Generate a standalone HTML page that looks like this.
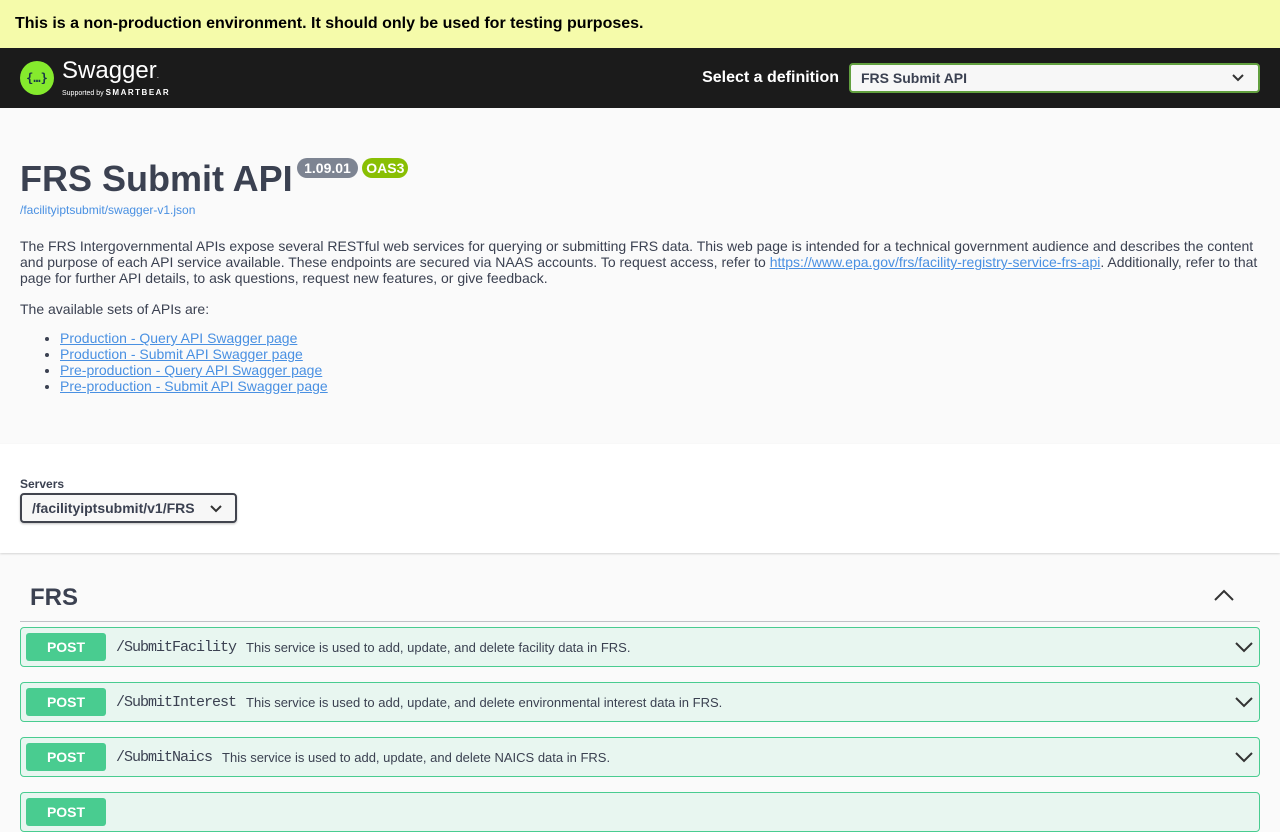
<!DOCTYPE html>
<html><head><meta charset="utf-8"><style>
*{box-sizing:border-box}
body{margin:0;font-family:"Liberation Sans",sans-serif;color:#3b4151;background:#fafafa;width:1280px;height:800px;overflow:hidden}
.banner{height:48px;background:#f5fbaa;color:#000;font-weight:bold;font-size:16px;padding:15px 15px 0}
.top{height:60px;background:#1b1b1b;display:flex;align-items:center;padding:0 20px;position:relative}
.sel{position:absolute;right:20px;top:15px;display:flex;align-items:center}
.sel label{color:#fff;font-weight:bold;font-size:16px;margin-right:10px}
.sel .box{width:411px;height:30px;border:2px solid #62a03f;border-radius:4px;background:#f7f7f7;font-weight:bold;font-size:14px;padding:5px 10px;position:relative;color:#3b4151}
.info{padding:50px 20px 50px;background:#fafafa}
h1{font-size:36px;margin:0;display:inline-block;font-weight:bold}
.badge{display:inline-block;vertical-align:top;margin-top:0;border-radius:57px;color:#fff;font-weight:bold;font-size:14px;padding:2px 5px;line-height:16px}
.url{font-size:12px;color:#4990e2;margin-top:3px}
p{font-size:14px;line-height:16px;margin:0 0 15px}
a{color:#4990e2}
ul{margin:0;padding-left:40px;font-size:14px;line-height:16px}
.servers{background:#fff;height:109px;padding:33px 20px 0;box-shadow:0 1px 2px rgba(0,0,0,.15)}
.servers .t{font-size:12px;font-weight:bold;margin-bottom:2px}
.sbox{width:217px;height:30px;border:2px solid #41444e;border-radius:4px;background:#f7f7f7;font-weight:bold;font-size:14px;padding:5px 10px;box-shadow:0 1px 2px rgba(0,0,0,.25)}
.tag{margin:0 20px;border-bottom:1px solid rgba(59,65,81,.3);height:69px;padding:31px 10px 0;position:relative}
.tag h3{margin:0;font-size:24px}
.op{margin:5px 20px 15px;height:40px;border:1px solid #49cc90;border-radius:4px;background:#e8f6f0;display:flex;align-items:center;padding:0 5px;position:relative}
.m{width:80px;height:28px;background:#49cc90;color:#fff;font-weight:bold;font-size:14px;border-radius:3px;text-align:center;line-height:28px}
.path{font-family:"Liberation Mono",monospace;font-size:15px;letter-spacing:-1px;padding:0 10px;color:#3b4151}
.d{font-size:13px}
.chev{position:absolute;right:6px;top:13px}
</style></head><body>
<div class="banner">This is a non-production environment. It should only be used for testing purposes.</div>
<div class="top">
<svg width="34" height="34" viewBox="0 0 34 34"><circle cx="17" cy="17" r="17" fill="#85ea2d"/><text x="17" y="21" font-size="12" text-anchor="middle" fill="#173647" font-family="DejaVu Sans Mono" font-weight="bold">{…}</text></svg>
<div style="margin-left:8px;color:#fff"><div style="font-size:24px;line-height:24px">Swagger<span style="font-size:8px">.</span></div><div style="font-size:7px;margin-left:0px">Supported by <b style="letter-spacing:1.5px;font-size:8px">SMARTBEAR</b></div></div>
<div class="sel"><label>Select a definition</label><div class="box">FRS Submit API<svg style="position:absolute;right:14px;top:9px" width="12" height="8"><path d="M1 1l5 5 5-5" stroke="#333" stroke-width="2" fill="none"/></svg></div></div>
</div>
<div class="info">
<h1>FRS Submit API</h1> <span class="badge" style="background:#7d8492;padding:2px 7px">1.09.01</span> <span class="badge" style="background:#89bf04;padding:2px 4px">OAS3</span>
<div class="url">/facilityiptsubmit/swagger-v1.json</div>
<div style="height:21px"></div>
<p>The FRS Intergovernmental APIs expose several RESTful web services for querying or submitting FRS data. This web page is intended for a technical government audience and describes the content and purpose of each API service available. These endpoints are secured via NAAS accounts. To request access, refer to <a href="#">https://www.epa.gov/frs/facility-registry-service-frs-api</a>. Additionally, refer to that page for further API details, to ask questions, request new features, or give feedback.</p>
<p style="margin-bottom:13px">The available sets of APIs are:</p>
<ul><li><a href="#">Production - Query API Swagger page</a></li><li><a href="#">Production - Submit API Swagger page</a></li><li><a href="#">Pre-production - Query API Swagger page</a></li><li><a href="#">Pre-production - Submit API Swagger page</a></li></ul>
</div>
<div class="servers"><div class="t">Servers</div><div class="sbox">/facilityiptsubmit/v1/FRS <svg style="margin-left:12px" width="12" height="8"><path d="M1 1l5 5 5-5" stroke="#333" stroke-width="2" fill="none"/></svg></div></div>
<div class="tag"><h3>FRS</h3><svg style="position:absolute;right:26px;top:36px" width="20" height="12"><path d="M1 11l9-9 9 9" stroke="#333" stroke-width="2" fill="none"/></svg></div>
<div class="op"><div class="m">POST</div><span class="path">/SubmitFacility</span><span class="d">This service is used to add, update, and delete facility data in FRS.</span><svg class="chev" width="18" height="12"><path d="M1 2l8 8 8-8" stroke="#333" stroke-width="2" fill="none"/></svg></div>
<div class="op"><div class="m">POST</div><span class="path">/SubmitInterest</span><span class="d">This service is used to add, update, and delete environmental interest data in FRS.</span><svg class="chev" width="18" height="12"><path d="M1 2l8 8 8-8" stroke="#333" stroke-width="2" fill="none"/></svg></div>
<div class="op"><div class="m">POST</div><span class="path">/SubmitNaics</span><span class="d">This service is used to add, update, and delete NAICS data in FRS.</span><svg class="chev" width="18" height="12"><path d="M1 2l8 8 8-8" stroke="#333" stroke-width="2" fill="none"/></svg></div>
<div class="op"><div class="m">POST</div></div>
</body></html>
